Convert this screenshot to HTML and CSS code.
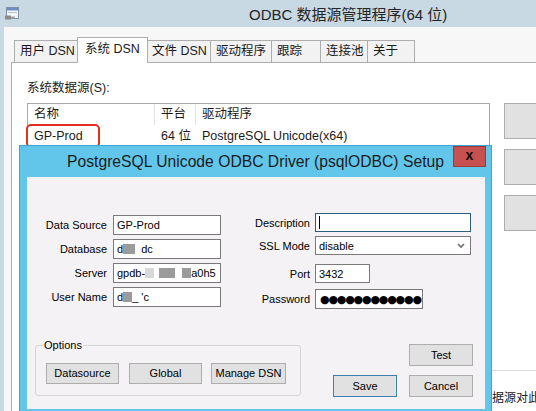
FILE: index.html
```html
<!DOCTYPE html>
<html lang="zh-CN">
<head>
    <meta charset="UTF-8">
    <title>ODBC 数据源管理程序(64 位)</title>
    <link rel="stylesheet" href="styles.css">
</head>
<body>
    <div class="admin">
        <div class="admin-title">
            <svg class="app-icon" viewBox="0 0 16 14">
                <rect x="2.5" y="0.5" width="12" height="11" fill="#f3f6fa" stroke="#7d90a8"/>
                <rect x="3" y="1" width="11" height="2.5" fill="#6b8fc2"/>
                <rect x="4" y="5" width="9" height="1" fill="#b7c3d2"/>
                <path d="M1 8.5h6v4H1z" fill="#8a8a8a"/>
                <path d="M7 9.5h4v2H7z" fill="#a5a5a5"/>
            </svg>
            <span class="admin-title-text">ODBC 数据源管理程序(64 位)</span>
        </div>

        <div class="admin-body">
            <div class="tabs">
                <div class="tab tab-user">用户 DSN</div>
                <div class="tab tab-system active">系统 DSN</div>
                <div class="tab tab-file">文件 DSN</div>
                <div class="tab tab-driver">驱动程序</div>
                <div class="tab tab-trace">跟踪</div>
                <div class="tab tab-pool">连接池</div>
                <div class="tab tab-about">关于</div>
            </div>

            <div class="tab-page">
                <div class="caption">系统数据源(S):</div>
                <div class="dsn-row">
                    <div class="dsn-list">
                        <div class="dsn-head">
                            <div class="col col-name">名称</div>
                            <div class="col col-platform">平台</div>
                            <div class="col col-driver">驱动程序</div>
                        </div>
                        <div class="dsn-item">
                            <div class="cell col-name">GP-Prod</div>
                            <div class="cell col-platform">64 位</div>
                            <div class="cell col-driver">PostgreSQL Unicode(x64)</div>
                        </div>
                    </div>
                    <div class="side-buttons">
                        <div class="side-btn"></div>
                        <div class="side-btn"></div>
                        <div class="side-btn"></div>
                    </div>
                </div>
                <div class="about">
                    <p class="about-text">数据源对此计算机上的所有用户可见</p>
                </div>
            </div>
        </div>
    </div>

    <div class="mark"></div>

    <div class="setup">
        <div class="setup-title">
            PostgreSQL Unicode ODBC Driver (psqlODBC) Setup
            <div class="close">x</div>
        </div>
        <div class="setup-body">
            <div class="fields">
                <div class="fields-left">
                    <label>Data Source</label>
                    <div class="field">GP-Prod</div>
                    <label>Database</label>
                    <div class="field">d<span class="redact r-db"></span>&nbsp; dc</div>
                    <label>Server</label>
                    <div class="field">gpdb-<span class="redact light r-s1"></span><span class="redact r-s2"></span><span class="redact r-s3"></span>a0h5</div>
                    <label>User Name</label>
                    <div class="field">d<span class="redact r-user"></span>_ 'c</div>
                </div>
                <div class="fields-right">
                    <div class="frow frow-desc">
                        <label>Description</label>
                        <div class="field field-wide focused"><span class="caret"></span></div>
                    </div>
                    <div class="frow frow-ssl">
                        <label>SSL Mode</label>
                        <div class="field field-wide select">
                            disable
                            <svg class="chevron" viewBox="0 0 8 6"><path d="M1 1l3 3 3-3" fill="none" stroke="#6d6d6d" stroke-width="1.6"/></svg>
                        </div>
                    </div>
                    <div class="frow frow-port">
                        <label>Port</label>
                        <div class="field field-port">3432</div>
                    </div>
                    <div class="frow frow-pass">
                        <label>Password</label>
                        <div class="field field-pass"><span class="dots">●●●●●●●●●●●●</span></div>
                    </div>
                </div>
            </div>

            <div class="actions">
                <div class="options">
                    <span class="legend">Options</span>
                    <div class="btn btn-ds">Datasource</div>
                    <div class="btn btn-global">Global</div>
                    <div class="btn btn-manage">Manage DSN</div>
                </div>
                <div class="dialog-buttons">
                    <div class="btn btn-test">Test</div>
                    <div class="btn btn-save">Save</div>
                    <div class="btn btn-cancel">Cancel</div>
                </div>
            </div>
        </div>
    </div>
</body>
</html>
```

FILE: styles.css
```css
body {
    margin: 0;
    width: 536px;
    height: 411px;
    overflow: hidden;
    position: relative;
    font-family: "Liberation Sans", "Noto Sans CJK SC", sans-serif;
    color: #1a1a1a;
    background-color: #f6f6f6;
}

/* ODBC 管理程序窗口 (背景, 右侧被截掉) */
.admin {
    width: 536px;
    height: 411px;
    overflow: hidden;
    background-color: #c8d9e4;
}
.admin-title {
    height: 27px;
    display: flex;
    align-items: center;
    padding-left: 4px;
}
.app-icon {
    width: 16px;
    height: 14px;
}
.admin-title-text {
    margin-left: 229px;
    font-size: 15px;
    color: #252525;
    white-space: nowrap;
}
.admin-body {
    margin-left: 4px;
    height: 384px;
    padding: 10px 0 0 7px;
    box-sizing: border-box;
    background-color: #f7f7f7;
}

.tabs {
    display: flex;
    height: 25px;
    padding-left: 3px;
    position: relative;
    z-index: 1;
}
.tab {
    flex-shrink: 0;
    height: 22px;
    margin-top: 3px;
    margin-right: -1px;
    padding-left: 5px;
    box-sizing: border-box;
    border: 1px solid #adadad;
    border-bottom: none;
    background-color: #f2f2f2;
    font-size: 12.5px;
    line-height: 21px;
    white-space: nowrap;
}
.tab.active {
    height: 26px;
    margin-top: 0;
    padding-left: 7px;
    background-color: #ffffff;
    line-height: 23px;
    position: relative;
    z-index: 2;
}
.tab-user { width: 64px; }
.tab-system { width: 71px; }
.tab-file { width: 64px; padding-left: 4px; }
.tab-driver { width: 62px; }
.tab-trace { width: 50px; }
.tab-pool { width: 48px; }
.tab-about { width: 48px; }

.tab-page {
    height: 349px;
    box-sizing: border-box;
    padding: 16px 0 0 15px;
    border: 1px solid #adadad;
    border-right: none;
    border-bottom: none;
    background-color: #ffffff;
}
.caption {
    font-size: 12.5px;
    line-height: 18px;
    margin-bottom: 6px;
}
.dsn-row {
    display: flex;
    gap: 14px;
    height: 255px;
}
.dsn-list {
    width: 463px;
    flex-shrink: 0;
    box-sizing: border-box;
    border: 1px solid #a8a8a8;
    background-color: #ffffff;
    font-size: 12.5px;
}
.dsn-head, .dsn-item {
    display: flex;
}
.dsn-head .col {
    height: 21px;
    line-height: 21px;
    padding-left: 6px;
    box-sizing: border-box;
    border-right: 1px solid #e3e3e3;
}
.dsn-item .cell {
    height: 22px;
    line-height: 22px;
    padding-left: 6px;
    box-sizing: border-box;
    white-space: nowrap;
}
.col-name { width: 127px; }
.col-platform { width: 41px; }
.col-driver { flex: 1; }
.dsn-head .col-driver { border-right: none; }

.side-buttons {
    flex: 1;
    display: flex;
    flex-direction: column;
    gap: 10px;
}
.side-btn {
    height: 36px;
    box-sizing: border-box;
    border: 1px solid #adadad;
    border-right: none;
    background-color: #e1e1e1;
}
.about {
    margin-top: 12px;
    padding-top: 18px;
    border-top: 1px solid #dcdcdc;
    overflow: hidden;
}
.about-text {
    margin: 0;
    padding-left: 453px;
    font-family: "Noto Sans CJK SC", sans-serif;
    font-size: 12px;
    line-height: 16px;
    white-space: nowrap;
}

/* 红色标注框 */
.mark {
    position: absolute;
    left: 26px;
    top: 124px;
    width: 74px;
    height: 24px;
    box-sizing: border-box;
    border: 2px solid #e2321f;
    border-radius: 5px;
}

/* psqlODBC 设置对话框 */
.setup {
    position: absolute;
    left: 19px;
    top: 145px;
    width: 473px;
    height: 266px;
    box-sizing: border-box;
    border: 1px solid #3ea5d2;
    border-bottom: none;
    background-color: #62c6ea;
}
.setup-title {
    position: relative;
    height: 31px;
    line-height: 31px;
    text-align: center;
    font-size: 15.7px;
    color: #1c1c1c;
}
.close {
    position: absolute;
    right: 5px;
    top: 0;
    width: 33px;
    height: 21px;
    box-sizing: border-box;
    border: 1px solid #9c3a3a;
    background-color: #c75050;
    font-size: 14px;
    font-weight: bold;
    line-height: 16px;
    color: #111111;
}
.setup-body {
    height: 232px;
    margin: 0 6px 0 7px;
    padding-top: 36px;
    box-sizing: border-box;
    background-color: #f4f2f4;
    font-size: 11px;
    color: #000000;
}

.fields {
    display: flex;
    align-items: flex-start;
    height: 131px;
}
.fields-left {
    margin-top: 2px;
    display: grid;
    grid-template-columns: 80px 108px;
    grid-auto-rows: 20px;
    column-gap: 6px;
    row-gap: 4px;
    align-items: center;
}
.fields-left label, .frow label {
    text-align: right;
}
.fields-right {
    margin-left: 14px;
    display: flex;
    flex-direction: column;
}
.frow {
    display: flex;
    align-items: center;
    height: 19px;
}
.frow label {
    width: 75px;
    margin-right: 5px;
}
.frow-ssl { margin-top: 4px; }
.frow-port { margin-top: 9px; }
.frow-pass { margin-top: 6px; height: 20px; }

.field {
    height: 100%;
    box-sizing: border-box;
    border: 1px solid #7a7a7a;
    background-color: #ffffff;
    padding-left: 3px;
    display: flex;
    align-items: center;
    white-space: nowrap;
    overflow: hidden;
    position: relative;
}
.field-wide { width: 156px; }
.field-port { width: 55px; }
.field-pass { width: 108px; }
.focused { border-color: #2f5d80; }
.caret {
    width: 1px;
    height: 13px;
    background-color: #000000;
}
.chevron {
    position: absolute;
    right: 5px;
    top: 6px;
    width: 8px;
    height: 6px;
}
.dots {
    font-family: "DejaVu Sans", sans-serif;
    font-size: 11px;
    letter-spacing: -1.2px;
    padding-left: 1px;
}
.redact {
    display: inline-block;
    height: 10px;
    background-color: #9b9b9b;
}
.redact.light { background-color: #d8d8d8; }
.r-db { width: 12px; }
.r-s1 { width: 9px; margin-right: 5px; }
.r-s2 { width: 16px; margin-right: 7px; }
.r-s3 { width: 9px; }
.r-user { width: 9px; }

.actions {
    display: flex;
    align-items: flex-start;
}
.options {
    position: relative;
    margin: 1px 0 0 8px;
    width: 266px;
    height: 51px;
    box-sizing: border-box;
    padding: 17px 0 0 10px;
    border: 1px solid #d6d6d6;
    border-radius: 3px;
    display: flex;
}
.legend {
    position: absolute;
    top: -7px;
    left: 7px;
    padding: 0 1px;
    line-height: 13px;
    background-color: #f4f2f4;
}
.btn {
    height: 21px;
    box-sizing: border-box;
    border: 1px solid #adadad;
    background-color: #e1e1e1;
    line-height: 19px;
    text-align: center;
}
.btn-ds { width: 73px; }
.btn-global { width: 73px; margin-left: 10px; }
.btn-manage { width: 75px; margin-left: 9px; }

.dialog-buttons {
    margin-left: 32px;
    display: grid;
    grid-template-columns: 64px 64px;
    grid-template-rows: 22px 22px;
    column-gap: 12px;
    row-gap: 9px;
}
.dialog-buttons .btn {
    height: 22px;
    line-height: 20px;
}
.btn-test { grid-column: 2; grid-row: 1; }
.btn-save { grid-column: 1; grid-row: 2; border-color: #3c7fb1; }
.btn-cancel { grid-column: 2; grid-row: 2; }
```
